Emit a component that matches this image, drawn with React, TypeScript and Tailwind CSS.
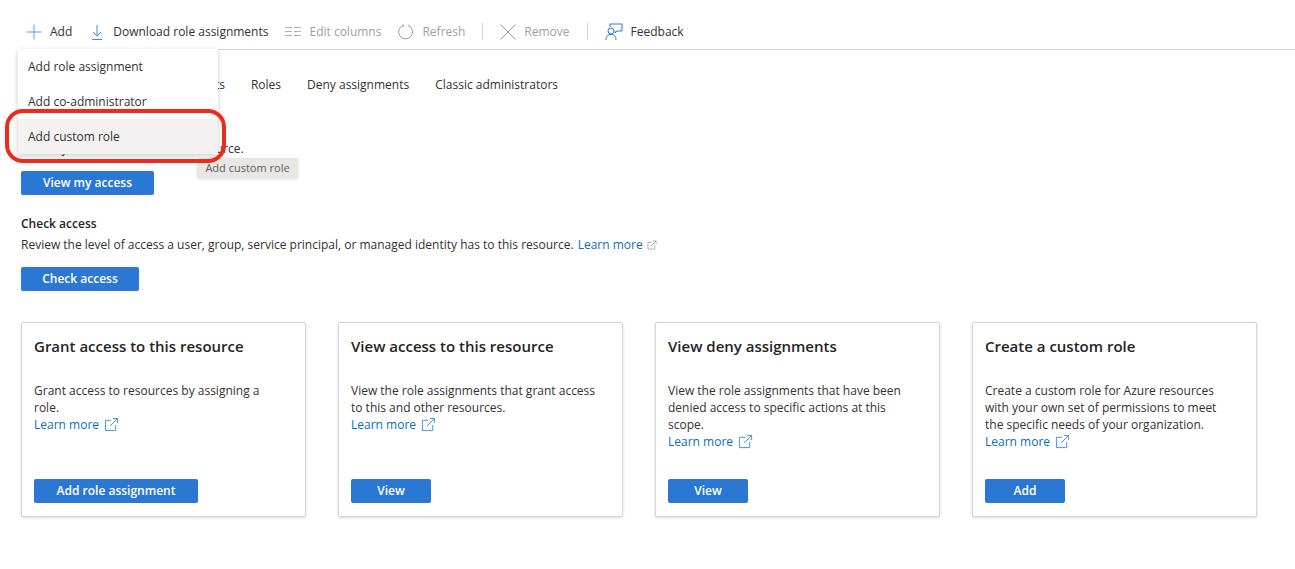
import React from "react";

const font = "font-['Open_Sans','Noto_Sans',sans-serif]";

function ExternalIcon({ className }: { className: string }) {
  return (
    <svg viewBox="0 0 16 16" fill="none" stroke="currentColor" strokeWidth="1" className={className}>
      <path d="M7.5 3.5H1.5V14.5H12.5V8.5" />
      <path d="M6.5 9.5L14.5 1.5M9.5 1.5H14.5V6.5" />
    </svg>
  );
}

function ToolButton({ icon, label, disabled }: { icon: React.ReactNode; label: string; disabled?: boolean }) {
  return (
    <div className="flex items-center gap-[8px]">
      {icon}
      <span className={disabled ? "text-[#a19f9d]" : "text-[#323130]"}>{label}</span>
    </div>
  );
}

function PrimaryButton({ label, className }: { label: string; className: string }) {
  return (
    <button className={`h-[24px] rounded-[2px] bg-[#2b78d4] text-[12px] font-semibold text-white ${className}`}>
      {label}
    </button>
  );
}

function Card({ title, text, button, buttonClass }: { title: string; text: string[]; button: string; buttonClass: string }) {
  return (
    <div className="flex h-[195px] w-[285px] flex-col rounded-[2px] border border-[#d6d6d6] bg-white px-[12px] pt-[13px] pb-[13px] shadow-[0_1px_3px_rgba(0,0,0,0.15)]">
      <h3 className="text-[15px] leading-[20px] font-semibold text-[#252423]">{title}</h3>
      <div className="mt-[26px] text-[12px] leading-[17px] text-[#323130]">
        {text.map((line) => (
          <div key={line}>{line}</div>
        ))}
        <a className="flex items-center gap-[5px] text-[#0f6cbd]">
          Learn more <ExternalIcon className="h-[15px] w-[15px] text-[#3f8fdb]" />
        </a>
      </div>
      <PrimaryButton label={button} className={`mt-auto ${buttonClass}`} />
    </div>
  );
}

export default function App() {
  return (
    <div className={`relative h-[569px] w-[1295px] overflow-hidden bg-white text-[12px] text-[#323130] ${font}`}>
      <div className="ml-[18px] flex h-[50px] items-center gap-[17px] border-b border-[#d4d4d4] pt-[14px] pl-[8px]">
        <ToolButton
          label="Add"
          icon={
            <svg viewBox="0 0 16 16" fill="none" stroke="#5a9fe0" strokeWidth="1" className="h-[16px] w-[16px]">
              <path d="M8 0.5V15.5M0.5 8H15.5" />
            </svg>
          }
        />
        <ToolButton
          label="Download role assignments"
          icon={
            <svg viewBox="0 0 16 16" fill="none" stroke="#3d8ddb" strokeWidth="1" className="h-[16px] w-[16px]">
              <path d="M8 1V12M4 8L8 12L12 8M3 15.5H13" />
            </svg>
          }
        />
        <ToolButton
          disabled
          label="Edit columns"
          icon={
            <svg viewBox="0 0 16 12" fill="none" stroke="#b3b1af" strokeWidth="1" className="h-[12px] w-[16px]">
              <path d="M0 1.5H7M9 1.5H16M0 5.5H7M9 5.5H16M0 9.5H7M9 9.5H16" />
            </svg>
          }
        />
        <ToolButton
          disabled
          label="Refresh"
          icon={
            <svg viewBox="0 0 16 16" fill="none" stroke="#a19f9d" strokeWidth="1" className="h-[16px] w-[16px]">
              <path d="M5.5 1.2A7 7 0 1 0 10 1.3M5 0.5L6 3.2" />
            </svg>
          }
        />
        <div className="h-[17px] w-px bg-[#d4d4d4]" />
        <ToolButton
          disabled
          label="Remove"
          icon={
            <svg viewBox="0 0 16 16" fill="none" stroke="#a19f9d" strokeWidth="1" className="h-[16px] w-[16px]">
              <path d="M0.5 0.5L15.5 15.5M15.5 0.5L0.5 15.5" />
            </svg>
          }
        />
        <div className="h-[17px] w-px bg-[#d4d4d4]" />
        <ToolButton
          label="Feedback"
          icon={
            <svg viewBox="0 0 18 18" fill="none" stroke="#2b78d4" strokeWidth="1" className="h-[18px] w-[18px]">
              <path d="M5 4V1H17V8H12L10 10V8" />
              <circle cx="6" cy="8" r="3" />
              <path d="M1 17C1 13 3 11.5 6 11.5C9 11.5 11 13 11 17" />
            </svg>
          }
        />
      </div>

      <div className="mt-[26px] ml-[28px] flex gap-[26px] leading-[18px]">
        <span>Check access</span>
        <span>Role assignments</span>
        <span>Roles</span>
        <span>Deny assignments</span>
        <span>Classic administrators</span>
      </div>

      <div className="mt-[24px] ml-[21px]">
        <h4 className="leading-[17px] font-semibold text-[#252423]">View my access</h4>
        <p className="mt-[5px] leading-[17px]">View my level of access to this resource.</p>
        <PrimaryButton label="View my access" className="mt-[14px] block w-[133px]" />

        <h4 className="mt-[20px] leading-[17px] font-semibold text-[#252423]">Check access</h4>
        <p className="mt-[4px] flex items-center leading-[17px]">
          Review the level of access a user, group, service principal, or managed identity has to this resource.
          <a className="ml-[4px] text-[#0f6cbd]">Learn more</a>
          <ExternalIcon className="ml-[4px] h-[10px] w-[10px] text-[#8a8886]" />
        </p>
        <PrimaryButton label="Check access" className="mt-[14px] block w-[118px]" />

        <div className="mt-[31px] flex gap-[32px]">
          <Card
            title="Grant access to this resource"
            text={["Grant access to resources by assigning a", "role."]}
            button="Add role assignment"
            buttonClass="w-[164px]"
          />
          <Card
            title="View access to this resource"
            text={["View the role assignments that grant access", "to this and other resources."]}
            button="View"
            buttonClass="w-[80px]"
          />
          <Card
            title="View deny assignments"
            text={["View the role assignments that have been", "denied access to specific actions at this", "scope."]}
            button="View"
            buttonClass="w-[80px]"
          />
          <Card
            title="Create a custom role"
            text={["Create a custom role for Azure resources", "with your own set of permissions to meet", "the specific needs of your organization."]}
            button="Add"
            buttonClass="w-[80px]"
          />
        </div>
      </div>

      {/* open menu */}
      <div className="absolute top-[49px] left-[18px] w-[200px] bg-white shadow-[0_2px_6px_rgba(0,0,0,0.2)]">
        <div className="flex h-[35px] items-center px-[10px]">Add role assignment</div>
        <div className="flex h-[35px] items-center px-[10px]">Add co-administrator</div>
        <div className="flex h-[35px] items-center bg-[#f3f2f1] px-[10px]">Add custom role</div>
      </div>

      <div className="absolute top-[158px] left-[197px] flex h-[20px] w-[101px] items-center justify-center rounded-[2px] bg-[#e9e6e3] text-[11px] text-[#605e5c] shadow-[0_1px_3px_rgba(0,0,0,0.15)]">
        Add custom role
      </div>

      {/* red highlight drawn over the screenshot */}
      <div className="absolute top-[109px] left-[5px] h-[54px] w-[221px] rounded-[18px] border-[4px] border-[#ee2a1b]" />
    </div>
  );
}
